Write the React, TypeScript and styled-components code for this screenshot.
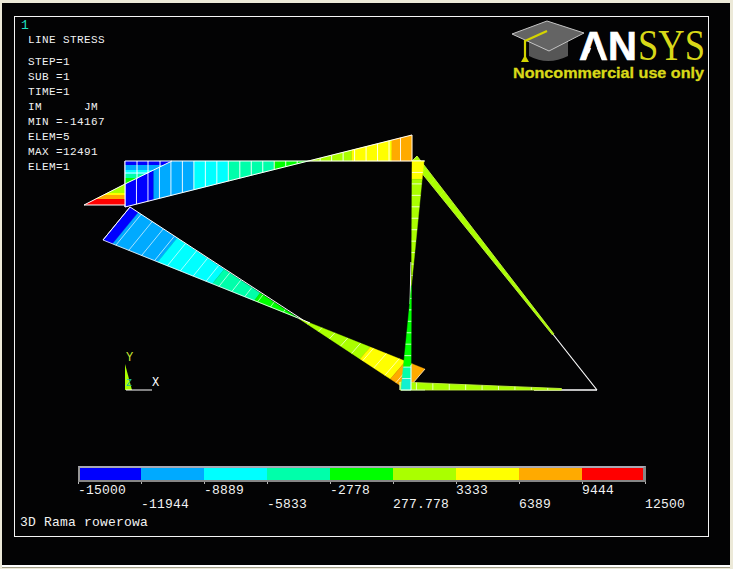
import React from 'react'
import styled, {createGlobalStyle} from 'styled-components'

type Pt = [number, number]

const BANDS = ['#0000ff', '#00aaff', '#00ffff', '#00ffaa', '#00ff00', '#aaff00', '#ffff00', '#ffaa00', '#ff0000']
const [BLUE, AZURE, CYAN, AQUA, GREEN, LIME, YELLOW, ORANGE, RED] = BANDS

const GlobalStyle = createGlobalStyle`
  html, body {
    margin: 0;
    padding: 0;
    background: #ece9d8;
  }
`
const Page = styled.div`
  width: 733px;
  height: 569px;
  box-sizing: border-box;
  padding: 3px 3px 1px 2px;
  background: #ece9d8;
  overflow: hidden;
`
const Viewport = styled.div`
  height: 562px;
  box-sizing: border-box;
  padding: 13px 21px 28px 12px;
  background: #030304;
  box-shadow: 0 2px 0 #ffffff, 0 3px 0 #a09c88;
`
const Frame = styled.div`
  position: relative;
  height: 100%;
  box-sizing: border-box;
  border: 1px solid #f4f4f4;
  display: flex;
  flex-direction: column;
  font-family: "Liberation Mono", monospace;
  color: #f2f2f2;
`
const Plot = styled.svg`
  position: absolute;
  left: 0;
  top: 0;
`
const Header = styled.header`
  flex: 1;
  display: flex;
  justify-content: space-between;
  align-items: flex-start;
`
const Readout = styled.div`
  padding: 3px 0 0 6px;
  display: flex;
  flex-direction: column;
  font-size: 11px;
  letter-spacing: 0.4px;
  line-height: 15px;
`
const WindowNumber = styled.div`
  color: #1fe0c0;
  font-size: 13px;
  line-height: 12px;
`
const Heading = styled.div`
  padding: 1px 0 7px 7px;
`
const ReadoutLine = styled.div`
  padding-left: 7px;
  white-space: pre;
`
const Logo = styled.svg`
  display: block;
`
const Legend = styled.section`
  margin-left: 63px;
  width: 640px;
`
const ColorBar = styled.div`
  width: 568px;
  height: 16px;
  box-sizing: border-box;
  display: flex;
  border-style: solid;
  border-width: 2px 3px 2px 2px;
  border-color: #a8a8b4 #868686 #868686 #969696;
`
const Swatch = styled.div<{$color: string}>`
  flex: 0 0 63px;
  background: ${({$color}) => $color};

  &:first-child,
  &:last-child {
    flex: 1 1 0;
  }
`
const Ticks = styled.div`
  width: 568px;
  height: 2px;
  display: flex;
  justify-content: space-between;
`
const Tick = styled.i`
  width: 1px;
  background: #b8b8b8;
`
const Scale = styled.div`
  display: grid;
  grid-template-columns: repeat(9, 63px) 1fr;
  grid-auto-rows: 13px;
  row-gap: 1px;
  font-size: 13px;
  line-height: 13px;
  letter-spacing: 0.2px;
`
const ScaleLabel = styled.span<{$index: number}>`
  grid-column: ${({$index}) => $index + 1};
  grid-row: ${({$index}) => ($index % 2) + 1};
  white-space: nowrap;
`
const Title = styled.div`
  padding: 5px 0 6px 5px;
  font-size: 13px;
  line-height: 14px;
  letter-spacing: 0.2px;
`

type BeamProps = {
  p0: Pt
  p1: Pt
  q0: Pt
  q1: Pt
  bands: [number, string][]
  divisions: number
  end?: number
  outline?: boolean
  edge?: string
  divisionOpacity?: number
}

const lerp = (a: Pt, b: Pt, t: number): Pt => [a[0] + (b[0] - a[0]) * t, a[1] + (b[1] - a[1]) * t]

// one element diagram: colour bands between the base line and the tip line
const Beam = ({p0, p1, q0, q1, bands, divisions, end = 1, outline = true, edge, divisionOpacity = 0.9}: BeamProps) => {
  let from = 0
  const polys = bands.map(([to, color]) => {
    const pts = [lerp(p0, p1, from), lerp(p0, p1, to), lerp(q0, q1, to), lerp(q0, q1, from)]
    from = to
    return <polygon key={to} points={pts.join(' ')} fill={color} stroke={edge ?? color} strokeWidth={edge ? 0.9 : 0.4} />
  })
  const lines = []
  for (let i = 0; i <= divisions; i++) {
    const t = i / divisions
    if (t > end) break
    const a = lerp(p0, p1, t)
    const b = lerp(q0, q1, t)
    lines.push(<line key={i} x1={a[0]} y1={a[1]} x2={b[0]} y2={b[1]} stroke="#fff" strokeOpacity={divisionOpacity} />)
  }
  return (
    <g>
      {polys}
      {lines}
      {outline && <polyline points={[q0, q1].join(' ')} fill="none" stroke="#fff" strokeWidth={1} />}
    </g>
  )
}

const READOUT = ['STEP=1', 'SUB =1', 'TIME=1', 'IM      JM', 'MIN =-14167', 'ELEM=5', 'MAX =12491', 'ELEM=1']
const SCALE = ['-15000', '-11944', '-8889', '-5833', '-2778', '277.778', '3333', '6389', '9444', '12500']

const AnsysLogo = () => (
  <Logo width={198} height={70} viewBox="510 17 198 70">
    {/* cap */}
    <path d="M529 40 L529 56 Q548 66 568 56 L568 40 Z" fill="#565656" />
    <polygon points="512,34 547,21 584,33 549,51" fill="#646464" stroke="#c4c4c4" strokeWidth={1} />
    <polyline points="547,31 525,41 525,60" fill="none" stroke="#d4d400" strokeWidth={2.2} />
    <path d="M521 62 L525 55 L529 62 Z" fill="#d4d400" />
    {/* wordmark */}
    <text transform="translate(579 60)" fontFamily="Liberation Sans" fontWeight={700} fontSize={40} fill="#fff" stroke="#fff" strokeWidth={0.7}>AN</text>
    <polygon points="594,41 586,61 602,61" fill="#030304" />
    <text transform="translate(638 60) scale(0.83 1)" fontFamily="Liberation Serif" fontSize={44} fill="#d8d818">SYS</text>
    <text x={513} y={78} fontFamily="Liberation Sans" fontWeight={700} fontSize={14} fill="#d8d818" stroke="#d8d818" strokeWidth={0.3} textLength={191} lengthAdjust="spacingAndGlyphs">Noncommercial use only</text>
  </Logo>
)

const Frame3D = () => (
  <Plot width={693} height={519} viewBox="15 17 693 519">
    {/* top tube */}
    <Beam
      p0={[125, 161]}
      p1={[412, 161]}
      q0={[125, 207]}
      q1={[412, 135]}
      divisions={25}
      bands={[[0.1, BLUE], [0.24, AZURE], [0.36, CYAN], [0.52, AQUA], [0.64, GREEN], [0.79, LIME], [0.93, YELLOW], [1, ORANGE]]}
    />
    <line x1={172} y1={161} x2={412} y2={161} stroke="#fff" />

    {/* head tube, right side */}
    <polygon points="125,161 172,161 164,165 125,165" fill={BLUE} />
    <polygon points="125,165 164,165 154,170 125,170" fill={AZURE} />
    <polygon points="125,170 154,170 146,174 125,174" fill={CYAN} />
    <polygon points="125,174 146,174 138,178 125,178" fill={AQUA} />
    <polygon points="125,178 138,178 125,184" fill={GREEN} />
    <line x1={125} y1={173} x2={148} y2={173} stroke="#fff" strokeOpacity={0.8} />
    <line x1={125} y1={161} x2={172} y2={161} stroke="#fff" />
    <line x1={125} y1={184} x2={172} y2={161} stroke="#fff" />
    <line x1={137} y1={161} x2={137} y2={179} stroke="#fff" />
    <line x1={148} y1={161} x2={148} y2={173} stroke="#fff" />
    <line x1={160} y1={161} x2={160} y2={167} stroke="#fff" />
    {/* head tube, left side */}
    <polygon points="125,184 125,193 107,193" fill={LIME} />
    <polygon points="125,193 125,195 103,195 107,193" fill={YELLOW} />
    <polygon points="125,195 125,199 95,199 103,195" fill={ORANGE} />
    <polygon points="125,199 125,205 84,205 95,199" fill={RED} />
    <polyline points="125,184 84,205 125,205" fill="none" stroke="#fff" />
    <line x1={125} y1={161} x2={125} y2={207} stroke="#fff" />

    {/* down tube */}
    <Beam
      p0={[130, 207]}
      p1={[407, 390]}
      q0={[103, 240]}
      q1={[425, 369]}
      divisions={25}
      bands={[[0.03, BLUE], [0.17, AZURE], [0.34, CYAN], [0.47, AQUA], [0.61, GREEN], [0.83, LIME], [0.94, YELLOW], [1, ORANGE]]}
      outline={false}
      divisionOpacity={0.65}
    />
    <polyline points="130,207 303,320" fill="none" stroke="#fff" />
    <polyline points="103,240 130,207" fill="none" stroke="#fff" />
    <polyline points="103,240 303,320" fill="none" stroke="#fff" strokeOpacity={0.8} />
    <line x1={303} y1={320} x2={310} y2={323} stroke="#fff" />

    {/* chain stay */}
    <line x1={534} y1={390} x2={597} y2={390} stroke="#fff" strokeWidth={1.4} />
    <Beam
      p0={[400, 390]}
      p1={[597, 390]}
      q0={[400, 382]}
      q1={[597, 390]}
      divisions={12}
      bands={[[0.82, LIME]]}
      end={0.82}
      outline={false}
      edge="#c4f040"
      divisionOpacity={0.7}
    />

    {/* seat stay */}
    <line x1={552} y1={333} x2={597} y2={390} stroke="#fff" strokeWidth={1.2} />
    <Beam
      p0={[412, 161]}
      p1={[597, 390]}
      q0={[417, 156]}
      q1={[597, 390]}
      divisions={20}
      bands={[[0.76, LIME]]}
      end={0.76}
      outline={false}
      edge="#c4f040"
      divisionOpacity={0.12}
    />

    {/* seat tube */}
    <line x1={412} y1={161} x2={425} y2={161} stroke="#fff" />
    <line x1={411} y1={262} x2={410} y2={304} stroke="#fff" />
    <Beam
      p0={[412, 161]}
      p1={[411, 390]}
      q0={[424, 161]}
      q1={[401, 390]}
      divisions={20}
      bands={[[0.08, YELLOW], [0.545, LIME], [0.9, GREEN], [0.95, AQUA], [1, '#10f0d0']]}
      outline={false}
      divisionOpacity={0.75}
    />
    <line x1={401} y1={390} x2={425} y2={390} stroke="#d8ffd0" strokeOpacity={0.7} />
    <line x1={411} y1={365} x2={411} y2={390} stroke="#fff" />

    {/* triad */}
    <polygon points="125,364 125,390 132,390" fill={LIME} />
    <line x1={126} y1={390} x2={152} y2={390} stroke="#fff" />
    <text x={126} y={361} fontFamily="Liberation Mono" fontSize={12} fill="#c8e832">Y</text>
    <text x={152} y={386} fontFamily="Liberation Mono" fontSize={12} fill="#fff">X</text>
    <text x={126} y={386} fontFamily="Liberation Mono" fontSize={10} fill="#20b8a0">Z</text>
  </Plot>
)

export default function App() {
  return (
    <Page>
      <GlobalStyle />
      <Viewport>
        <Frame>
          <Frame3D />
          <Header>
            <Readout>
              <WindowNumber>1</WindowNumber>
              <Heading>LINE STRESS</Heading>
              {READOUT.map((line, i) => (
                <ReadoutLine key={i}>{line}</ReadoutLine>
              ))}
            </Readout>
            <AnsysLogo />
          </Header>
          <Legend>
            <ColorBar>
              {BANDS.map((color) => (
                <Swatch key={color} $color={color} />
              ))}
            </ColorBar>
            <Ticks>
              {SCALE.map((label) => (
                <Tick key={label} />
              ))}
            </Ticks>
            <Scale>
              {SCALE.map((label, i) => (
                <ScaleLabel key={label} $index={i}>{label}</ScaleLabel>
              ))}
            </Scale>
          </Legend>
          <Title>3D Rama rowerowa</Title>
        </Frame>
      </Viewport>
    </Page>
  )
}
